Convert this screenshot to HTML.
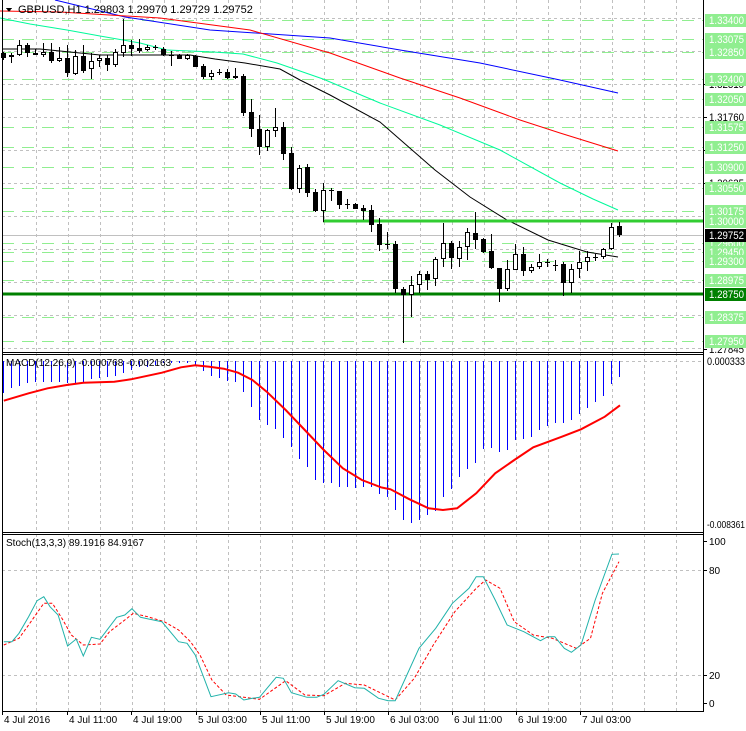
<!DOCTYPE html>
<html><head><meta charset="utf-8">
<style>
html,body{margin:0;padding:0;background:#fff;width:746px;height:731px;overflow:hidden}
svg{display:block;font-family:"Liberation Sans",sans-serif}
</style></head>
<body>
<svg id="s" width="746" height="731" xmlns="http://www.w3.org/2000/svg" shape-rendering="crispEdges"></svg>
<script>
var o='';
function L(x1,y1,x2,y2,c,w,d){o+='<line x1="'+x1+'" y1="'+y1+'" x2="'+x2+'" y2="'+y2+'" stroke="'+c+'" stroke-width="'+(w||1)+'"'+(d?' stroke-dasharray="'+d+'"':'')+'/>';}
function P(pts,c,w,d,sm){o+='<polyline fill="none" points="'+pts.map(function(p){return p[0]+','+p[1]}).join(' ')+'" stroke="'+c+'" stroke-width="'+(w||1)+'"'+(d?' stroke-dasharray="'+d+'"':'')+(sm?' shape-rendering="auto"':'')+'/>';}
function T(x,y,t,c,sz,tl){o+='<text x="'+x+'" y="'+y+'" font-size="'+(sz||11)+'" fill="'+(c||'#000')+'"'+(tl?' textLength="'+tl+'" lengthAdjust="spacingAndGlyphs"':'')+'>'+t+'</text>';}
[[0,352],[353,532],[534,711]].forEach(function(p){for(var k=1;k<=21;k++){var x=4+32*k+0.5;L(x,p[0],x,p[1],'#c0c0c0',1,'3,3');}});
for(var k=0;k<11;k++){var y=18+33*k+0.5;L(2,y,703,y,'#c0c0c0',1,'3,3');}
L(2,361.5,703,361.5,'#c0c0c0',1,'3,3');
L(2,570.5,703,570.5,'#c0c0c0',1,'3,3');
L(2,675.5,703,675.5,'#c0c0c0',1,'3,3');
var lv=[[20,'1.33400'],[39,'1.33075'],[52,'1.32850'],[79,'1.32400'],[99,'1.32050'],[127,'1.31575'],[147,'1.31250'],[167,'1.30900'],[188,'1.30550'],[211,'1.30175'],[243,'1.29600'],[252,'1.29450'],[261,'1.29300'],[280,'1.28975'],[317,'1.28375'],[341,'1.27950']];
lv.forEach(function(l){L(2,l[0]+0.5,703,l[0]+0.5,'#90ee90',1,'12,8');});
L(2,235.5,703,235.5,'#c0c0c0',1);
P([[55,0],[125,17],[210,30],[330,38],[400,50],[480,63],[560,80],[618,93]],'#0000ff',1,0,1);
P([[0,11],[60,12],[160,18],[250,30],[330,53],[400,78],[460,98],[520,120],[560,133],[618,151]],'#ff0000',1,0,1);
P([[0,18],[30,24],[67,30],[100,36],[140,43],[167,50],[213,52],[243,54],[277,63],[323,79],[380,103],[440,125],[500,150],[560,183],[593,199],[618,210]],'#00fa9a',1,0,1);
P([[3,49],[40,49],[100,55],[190,55],[215,59],[245,63],[280,69],[300,80],[330,95],[380,122],[435,170],[470,197],[507,220],[548,240],[587,252],[618,257]],'#000',1,0,1);
L(323,221,703,221,'#32cd32',3);
L(2,294,703,294,'#008000',3);
var C=[[53,58,52,60,0],[55,57,53,63,1],[45,55,40,56,1],[45,53,43,57,0],[53,55,49,55,0],[52,55,43,57,1],[52,61,43,63,0],[58,61,47,62,1],[58,73,45,77,0],[56,74,50,75,1],[56,71,45,73,0],[61,69,53,79,1],[58,61,55,67,1],[58,65,55,71,0],[52,65,49,67,1],[45,53,19,57,1],[45,49,40,56,0],[48,51,39,53,0],[47,50,45,51,1],[47,48,45,50,0],[49,55,47,56,0],[55,56,51,66,0],[55,59,54,59,0],[55,59,54,60,1],[56,67,55,67,0],[66,77,64,79,0],[73,77,70,80,1],[72,73,69,75,0],[72,78,69,79,0],[76,78,68,79,0],[76,113,74,116,0],[112,129,99,137,0],[129,147,115,155,0],[130,147,129,151,1],[127,131,108,137,1],[127,154,122,160,0],[153,189,147,190,0],[168,189,165,193,1],[167,193,164,197,0],[192,211,189,212,0],[190,211,183,222,1],[190,191,188,201,0],[191,205,191,209,0],[204,205,199,209,0],[204,209,203,209,0],[208,211,205,220,0],[210,225,205,232,0],[224,245,218,251,0],[244,245,232,249,0],[244,289,241,293,0],[289,295,287,343,0],[285,295,276,317,1],[274,285,271,293,1],[274,280,271,290,0],[259,279,257,286,1],[243,259,223,267,1],[243,258,241,269,0],[247,259,241,267,1],[232,247,228,260,1],[233,240,212,249,0],[239,252,238,253,0],[251,268,234,269,0],[268,289,268,302,0],[269,289,260,291,1],[254,270,244,270,1],[254,271,247,276,0],[267,271,264,273,1],[262,267,254,269,1],[262,263,259,267,0],[265,266,260,271,0],[264,283,262,296,0],[269,283,264,293,1],[262,269,251,278,1],[257,262,251,271,1],[257,258,254,261,0],[249,257,248,259,1],[227,249,223,250,1],[226,235,222,237,0]];
C.forEach(function(c,i){var x=3+8*i;L(x+0.5,c[2],x+0.5,c[3],'#000',1);var h=Math.max(1,c[1]-c[0]);
 if(h<=1){L(x-2,c[0]+0.5,x+3,c[0]+0.5,'#000',1);}
 else o+='<rect x="'+(x-1.5)+'" y="'+(c[0]+0.5)+'" width="4" height="'+(h-1)+'" fill="'+(c[4]?'#fff':'#000')+'" stroke="#000" stroke-width="1"/>';});
var H=[158,145,138,130,125,125,125,127,128,130,125,118,115,110,108,98,90,82,80,75,70,68,68,68,75,92,108,115,122,125,155,200,240,255,268,293,322,358,380,420,430,430,440,442,445,442,440,462,470,510,540,548,540,525,512,470,448,412,388,368,328,325,335,330,300,298,290,270,258,250,248,240,222,205,185,168,132,110];
H.forEach(function(v,i){var x=3+8*i+0.5;L(x,361,x,Math.round(340+v/3),'#0000ff',1);});
var S=[[8,182],[60,160],[100,145],[140,135],[175,128],[240,125],[275,118],[340,98],[380,82],[410,76],[440,80],[470,86],[500,98],[530,120],[560,155],[600,210],[640,270],[680,330],[720,385],[760,420],[800,442],[820,448],[860,478],[900,505],[930,510],[960,505],[1000,460],[1040,400],[1080,360],[1120,322],[1180,290],[1220,268],[1270,230],[1302,196]];
P(S.map(function(p){return [(p[0]/2.1).toFixed(1),(340+p[1]/3).toFixed(1)]}),'#ff0000',2,0,1);
var K=[[8,365],[25,365],[40,340],[60,290],[78,242],[92,230],[105,260],[122,285],[142,378],[160,357],[175,408],[192,352],[210,358],[245,292],[262,285],[277,266],[295,292],[312,297],[340,305],[375,365],[393,370],[410,405],[443,530],[480,518],[495,522],[512,540],[530,535],[545,532],[580,472],[595,475],[612,518],[645,532],[665,532],[680,523],[710,482],[745,503],[765,505],[795,535],[815,542],[830,542],[880,385],[915,325],[950,250],[985,205],[1000,170],[1015,170],[1040,240],[1065,315],[1100,335],[1135,362],[1150,350],[1165,350],[1185,385],[1200,397],[1220,375],[1250,240],[1285,103],[1300,102]];
var D=[[8,375],[40,355],[60,315],[92,250],[110,250],[130,295],[150,345],[175,375],[210,372],[230,335],[262,300],[280,280],[310,290],[345,305],[375,330],[400,365],[420,405],[445,480],[475,525],[545,538],[600,482],[640,525],[680,527],[725,490],[765,495],[830,540],[870,475],[910,375],[955,275],[1000,205],[1020,180],[1050,205],[1080,305],[1120,345],[1160,355],[1210,385],[1240,355],[1265,220],[1300,125]];
function cv(a){return a.map(function(p){return [(p[0]/2.1).toFixed(1),(520+p[1]/3).toFixed(1)]});}
P(cv(D),'#ff0000',1,'3,2',1);
P(cv(K),'#20b2aa',1,0,1);
L(2.5,0,2.5,711,'#000',1);
L(703.5,0,703.5,711,'#000',1);
L(2,352.5,704,352.5,'#000',1);L(2,354.5,704,354.5,'#000',1);
L(2,532.5,704,532.5,'#000',1);L(2,534.5,704,534.5,'#000',1);
L(2,711.5,704,711.5,'#000',1);
[[84,'1.32315'],[117,'1.31760'],[150,'1.31150'],[183,'1.30635'],[349,'1.27845']].forEach(function(l){L(703,l[0]+0.5,707,l[0]+0.5,'#000',1);T(709,l[0]+4,l[1],'#000',11,35);});
lv.concat([[221,'1.30000']]).forEach(function(l){o+='<rect x="705" y="'+(l[0]-6)+'" width="41" height="13" fill="#90ee90"/>';T(709,l[0]+4,l[1],'#fff',11,35);});
o+='<rect x="705" y="229" width="41" height="13" fill="#000"/>';T(709,239,'1.29752','#fff',11,35);
o+='<rect x="705" y="288" width="41" height="13" fill="#008000"/>';T(709,298,'1.28750','#fff',11,35);
T(707,365,'0.000333','#000',11,38);T(707,528,'-0.008361','#000',10,38);
[[541,'100'],[570,'80'],[675,'20'],[703,'0']].forEach(function(l){L(703,l[0]+0.5,707,l[0]+0.5,'#000',1);T(709,l[0]+4,l[1],'#000',10);});
o+='<path d="M6 8 L12 8 L9 12 Z" fill="#000"/>';
T(18,13,'GBPUSD,H1  1.29803 1.29970 1.29729 1.29752','#000',11);
T(6,366,'MACD(12,26,9) -0.000768 -0.002163','#000',10);
T(6,546,'Stoch(13,3,3) 89.1916 84.9167','#000',10);
[[2,'4 Jul 2016'],[67,'4 Jul 11:00'],[131,'4 Jul 19:00'],[196,'5 Jul 03:00'],[260,'5 Jul 11:00'],[324,'5 Jul 19:00'],[388,'6 Jul 03:00'],[452,'6 Jul 11:00'],[516,'6 Jul 19:00'],[580,'7 Jul 03:00']].forEach(function(l){L(l[0]+0.5,711,l[0]+0.5,715,'#000',1);T(l[0]+2,723,l[1],'#000',10);});
document.getElementById('s').innerHTML=o;
</script>
</body></html>
